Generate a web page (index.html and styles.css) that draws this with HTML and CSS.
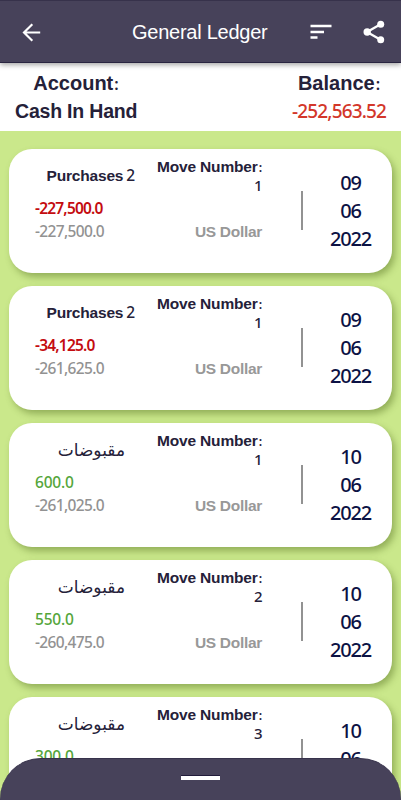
FILE: index.html
```html
<!DOCTYPE html>
<html lang="en">
<head>
<meta charset="utf-8">
<title>General Ledger</title>
<link rel="stylesheet" href="styles.css">
</head>
<body>
<div class="app">
  <header class="bar">
    <svg class="back" viewBox="0 0 24 24"><path d="M23 12H3M13 1.500 2.500 12 13 22.500" fill="none" stroke="#fff" stroke-width="2.700"/></svg>
    <h1>General Ledger</h1>
    <svg class="sort" viewBox="0 0 22 16"><path d="M.5 2h21M.5 8H14M.5 13.600H7.500" stroke="#fff" stroke-width="2.500"/></svg>
    <svg class="share" viewBox="0 0 22 24"><path d="M18 4 4 12l14 8" fill="none" stroke="#fff" stroke-width="2.300"/><g fill="#fff"><circle cx="17.700" cy="4.300" r="3.500"/><circle cx="4.200" cy="12" r="3.700"/><circle cx="17.700" cy="19.700" r="3.500"/></g></svg>
  </header>
  <section class="summary">
    <div class="account"><div>Account<i>:</i></div><div class="name">Cash In Hand</div></div>
    <div class="balance"><div>Balance<i>:</i></div><div class="total">-252,563.52</div></div>
  </section>
  <main class="list">
    <article class="card">
      <div class="entry"><h2>Purchases <b>2</b></h2><p class="amount debit">-227,500.0</p><p class="amount">-227,500.0</p></div>
      <div class="move"><h3>Move Number<i>:</i></h3><span class="no">1</span><p class="currency">US Dollar</p></div>
      <div class="rule"></div>
      <div class="date"><span>09</span><span>06</span><span>2022</span></div>
    </article>
    <article class="card">
      <div class="entry"><h2>Purchases <b>2</b></h2><p class="amount debit">-34,125.0</p><p class="amount">-261,625.0</p></div>
      <div class="move"><h3>Move Number<i>:</i></h3><span class="no">1</span><p class="currency">US Dollar</p></div>
      <div class="rule"></div>
      <div class="date"><span>09</span><span>06</span><span>2022</span></div>
    </article>
    <article class="card">
      <div class="entry"><h2 class="ar" lang="ar">مقبوضات</h2><p class="amount credit">600.0</p><p class="amount">-261,025.0</p></div>
      <div class="move"><h3>Move Number<i>:</i></h3><span class="no">1</span><p class="currency">US Dollar</p></div>
      <div class="rule"></div>
      <div class="date"><span>10</span><span>06</span><span>2022</span></div>
    </article>
    <article class="card">
      <div class="entry"><h2 class="ar" lang="ar">مقبوضات</h2><p class="amount credit">550.0</p><p class="amount">-260,475.0</p></div>
      <div class="move"><h3>Move Number<i>:</i></h3><span class="no">2</span><p class="currency">US Dollar</p></div>
      <div class="rule"></div>
      <div class="date"><span>10</span><span>06</span><span>2022</span></div>
    </article>
    <article class="card">
      <div class="entry"><h2 class="ar" lang="ar">مقبوضات</h2><p class="amount credit">300.0</p></div>
      <div class="move"><h3>Move Number<i>:</i></h3><span class="no">3</span></div>
      <div class="rule"></div>
      <div class="date"><span>10</span><span>06</span></div>
    </article>
  </main>
  <footer class="sheet"><div class="handle"></div></footer>
</div>
</body>
</html>
```
FILE: styles.css
```css
* { box-sizing: border-box; margin: 0; padding: 0; }
body { font-family: "Liberation Sans", sans-serif; color: #252139; }
.app { position: relative; width: 401px; height: 800px; overflow: hidden; background: #cae88b; display: flex; flex-direction: column; }
i { font: 600 .8em "Noto Sans", sans-serif; line-height: 1; margin-left: 1px; }

.bar { position: relative; z-index: 1; flex: none; height: 63px; background: #47425a; border-top: 1px solid #37324b; border-bottom: 1px solid #292440; box-shadow: 0 2px 5px rgba(0,0,0,.35); display: flex; align-items: center; padding-left: 22px; }
.back { width: 19px; height: 19px; margin-top: 1px; }
.bar h1 { margin: 2px 0 0 91px; width: 136px; font-size: 20px; font-weight: 400; letter-spacing: -.25px; color: #fff; white-space: nowrap; }
.sort { width: 22px; height: 16px; margin: 0 0 0 42px; }
.share { width: 22px; height: 24px; margin: 0 0 0 31px; }

.summary { flex: none; height: 68px; background: #fff; display: flex; justify-content: space-between; padding: 6px 15px 0 15px; font-size: 20px; font-weight: 700; line-height: 28px; text-align: center; white-space: nowrap; }
.account { width: 122px; }
.balance { width: 94px; }
.name { font-size: 19.500px; letter-spacing: -.2px; }
.total { color: #d3372a; font: 500 19px/28px "Noto Sans", sans-serif; letter-spacing: -.85px; }

.list { padding: 18px 9px 0; display: flex; flex-direction: column; gap: 13.500px; }
.card { flex: none; height: 123.500px; border-radius: 23px; background: #fff; box-shadow: 3px 4px 7px rgba(70,95,20,.42); display: flex; white-space: nowrap; }
.card > * { flex: none; }
.entry { width: 126px; padding: 16px 0 0 26px; }
.entry h2 { height: 22px; font-size: 15.500px; line-height: 22px; text-align: right; letter-spacing: -.2px; }
.entry h2 b { font: 500 15.500px "Noto Sans", sans-serif; line-height: 1; margin-left: -1px; }
.entry h2.ar { font: 400 17px/22px "DejaVu Sans", sans-serif; letter-spacing: 0; padding-right: 10px; }
.amount { font: 500 15.500px/23px "Noto Sans", sans-serif; letter-spacing: -.65px; color: #929292; }
.debit { color: #c40c10; font-weight: 600; letter-spacing: -.8px; margin-top: 10px; }
.credit { color: #55a63b; letter-spacing: -.2px; margin-top: 10px; }
.move { width: 127px; padding-top: 9px; text-align: right; }
.move h3 { height: 18px; font-size: 15.500px; line-height: 18px; letter-spacing: -.15px; }
.no { display: block; height: 18px; font: 500 15px/18px "Noto Sans", sans-serif; letter-spacing: -.5px; }
.currency { margin-top: 29px; font-size: 15.500px; font-weight: 700; line-height: 18px; letter-spacing: -.3px; color: #989898; }
.rule { width: 2px; height: 39px; margin: 42px 0 0 39px; background: #929292; }
.date { width: 95px; padding-top: 20px; display: flex; flex-direction: column; text-align: center; font: 500 20px/28px "Noto Sans", sans-serif; letter-spacing: -1.200px; color: #0c1244; }

.sheet { position: absolute; left: 0; right: 0; bottom: 0; height: 42px; border-radius: 41px 41px 0 0; background: #47425a; border-top: 1px solid #37324b; padding-top: 16px; }
.handle { width: 39px; height: 5px; margin: 0 auto; background: #fff; border-top: 1px solid #211b3a; }
```
